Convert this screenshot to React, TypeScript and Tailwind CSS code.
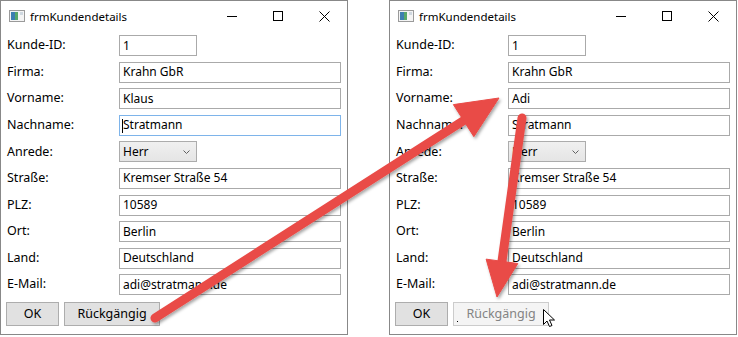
import React from 'react';

interface Field {
  label: string;
  value: string;
  width?: string;
  combo?: boolean;
  focused?: boolean;
}

const font = { fontFamily: '"Noto Sans", "Open Sans", Arial, sans-serif' };

const TitleIcon = () => (
  <svg width="16" height="12" viewBox="0 0 16 12" className="shrink-0">
    <rect x="0.5" y="0.5" width="15" height="11" fill="#f4f4f4" stroke="#9a9a9a" />
    <rect x="2" y="2" width="4" height="8" fill="#3d7fb0" />
    <rect x="6" y="2" width="3" height="8" fill="#58a86a" />
    <rect x="11" y="2" width="3" height="3" fill="#cfd8e0" />
  </svg>
);

const Window: React.FC<{ fields: Field[]; undoDisabled?: boolean }> = ({ fields, undoDisabled }) => (
  <div className="w-[348px] h-[335px] border border-[#888888] bg-white flex flex-col text-[12px] text-black">
    {/* title bar */}
    <div className="h-[30px] flex items-center shrink-0">
      <div className="pl-[8px] pr-[5px] flex items-center">
        <TitleIcon />
      </div>
      <span className="text-[11.5px] leading-none flex-1 pt-[1px]">frmKundendetails</span>
      <div className="flex h-full">
        <div className="w-[46px] flex items-center justify-center">
          <svg width="10" height="10" viewBox="0 0 10 10"><line x1="0" y1="5.5" x2="10" y2="5.5" stroke="#000" /></svg>
        </div>
        <div className="w-[46px] flex items-center justify-center">
          <svg width="10" height="10" viewBox="0 0 10 10"><rect x="0.5" y="0.5" width="9" height="9" fill="none" stroke="#000" /></svg>
        </div>
        <div className="w-[46px] flex items-center justify-center">
          <svg width="11" height="11" viewBox="0 0 11 11"><path d="M0.5 0.5 L10.5 10.5 M10.5 0.5 L0.5 10.5" stroke="#000" /></svg>
        </div>
      </div>
    </div>

    {/* form */}
    <div className="flex flex-col gap-[5.6px] pt-[4px] pl-[5px] pr-[6px]">
      {fields.map((f) => (
        <div key={f.label} className="flex items-center h-[21px]">
          <span className="w-[113px] pl-[1px] shrink-0 text-[12.5px]">{f.label}</span>
          {f.combo ? (
            <div className="w-[78px] h-[21px] border border-[#acacac] bg-gradient-to-b from-[#f0f0f0] to-[#e5e5e5] flex items-center pl-[3px] pr-[6px]">
              <span className="flex-1">{f.value}</span>
              <svg width="7" height="4" viewBox="0 0 7 4"><path d="M0.5 0.5 L3.5 3.5 L6.5 0.5" fill="none" stroke="#606060" /></svg>
            </div>
          ) : (
            <div
              className={`${f.width ?? 'flex-1'} h-[21px] border ${f.focused ? 'border-[#7eb4ea]' : 'border-[#aaaaaa]'} bg-white flex items-center pl-[3px] relative`}
            >
              {f.focused && <span className="absolute left-[2px] top-[3px] w-[1px] h-[14px] bg-black" />}
              <span>{f.value}</span>
            </div>
          )}
        </div>
      ))}
      <div className="flex gap-[5px] mt-[1px]">
        <button className="w-[53px] h-[24px] border border-[#adadad] bg-[#e1e1e1] text-[12.5px]">OK</button>
        {undoDisabled ? (
          <button className="w-[96px] h-[24px] border border-[#cccccc] bg-[#f4f4f4] text-[#838383] text-[12.5px] relative">
            <span className="absolute left-[3px] top-[18px] w-[1px] h-[1px] bg-black" />
            Rückgängig
          </button>
        ) : (
          <button className="w-[96px] h-[24px] border border-[#adadad] bg-[#e1e1e1] text-[12.5px]">Rückgängig</button>
        )}
      </div>
    </div>
  </div>
);

// arrow geometry
function arrow(x1: number, y1: number, x2: number, y2: number, L: number, W: number) {
  const dx = x2 - x1;
  const dy = y2 - y1;
  const len = Math.hypot(dx, dy);
  const ux = dx / len;
  const uy = dy / len;
  const nx = -uy;
  const ny = ux;
  const bx = x2 - ux * L;
  const by = y2 - uy * L;
  return {
    shaft: { x1, y1, x2: bx + ux * 2, y2: by + uy * 2 },
    head: `${x2},${y2} ${bx + nx * W},${by + ny * W} ${bx - nx * W},${by - ny * W}`,
  };
}

const Arrows = () => {
  const a1 = arrow(155, 318, 499, 98, 42, 19);
  const a2 = arrow(522, 118, 497, 297, 36, 16);
  return (
    <svg className="absolute inset-0 pointer-events-none" width="738" height="337" viewBox="0 0 738 337">
      <defs>
        <filter id="sh" x="-20%" y="-20%" width="140%" height="140%">
          <feDropShadow dx="1.5" dy="2" stdDeviation="1.8" floodColor="#000" floodOpacity="0.35" />
        </filter>
      </defs>
      {[a1, a2].map((a, i) => (
        <g key={i} filter="url(#sh)" fill="#e94b47" stroke="#e94b47">
          <line {...a.shaft} strokeWidth="9" strokeLinecap="round" />
          <polygon points={a.head} strokeWidth="1" strokeLinejoin="round" />
        </g>
      ))}
      <g transform="translate(543.5 309.5)">
        <path d="M0 0 L0 15 L3.5 11.5 L6 17 L8.5 16 L6 10.5 L11 10.5 Z" fill="#fff" stroke="#000" strokeWidth="1" strokeLinejoin="miter" />
      </g>
    </svg>
  );
};

export default function App() {
  const base = (vorname: string, focused: boolean): Field[] => [
    { label: 'Kunde-ID:', value: '1', width: 'w-[78px]' },
    { label: 'Firma:', value: 'Krahn GbR' },
    { label: 'Vorname:', value: vorname },
    { label: 'Nachname:', value: 'Stratmann', focused },
    { label: 'Anrede:', value: 'Herr', combo: true },
    { label: 'Straße:', value: 'Kremser Straße 54' },
    { label: 'PLZ:', value: '10589' },
    { label: 'Ort:', value: 'Berlin' },
    { label: 'Land:', value: 'Deutschland' },
    { label: 'E-Mail:', value: 'adi@stratmann.de' },
  ];

  return (
    <div className="w-[738px] h-[337px] bg-white relative flex gap-[41px]" style={font}>
      <Window fields={base('Klaus', true)} />
      <Window fields={base('Adi', false)} undoDisabled />
      <Arrows />
    </div>
  );
}
